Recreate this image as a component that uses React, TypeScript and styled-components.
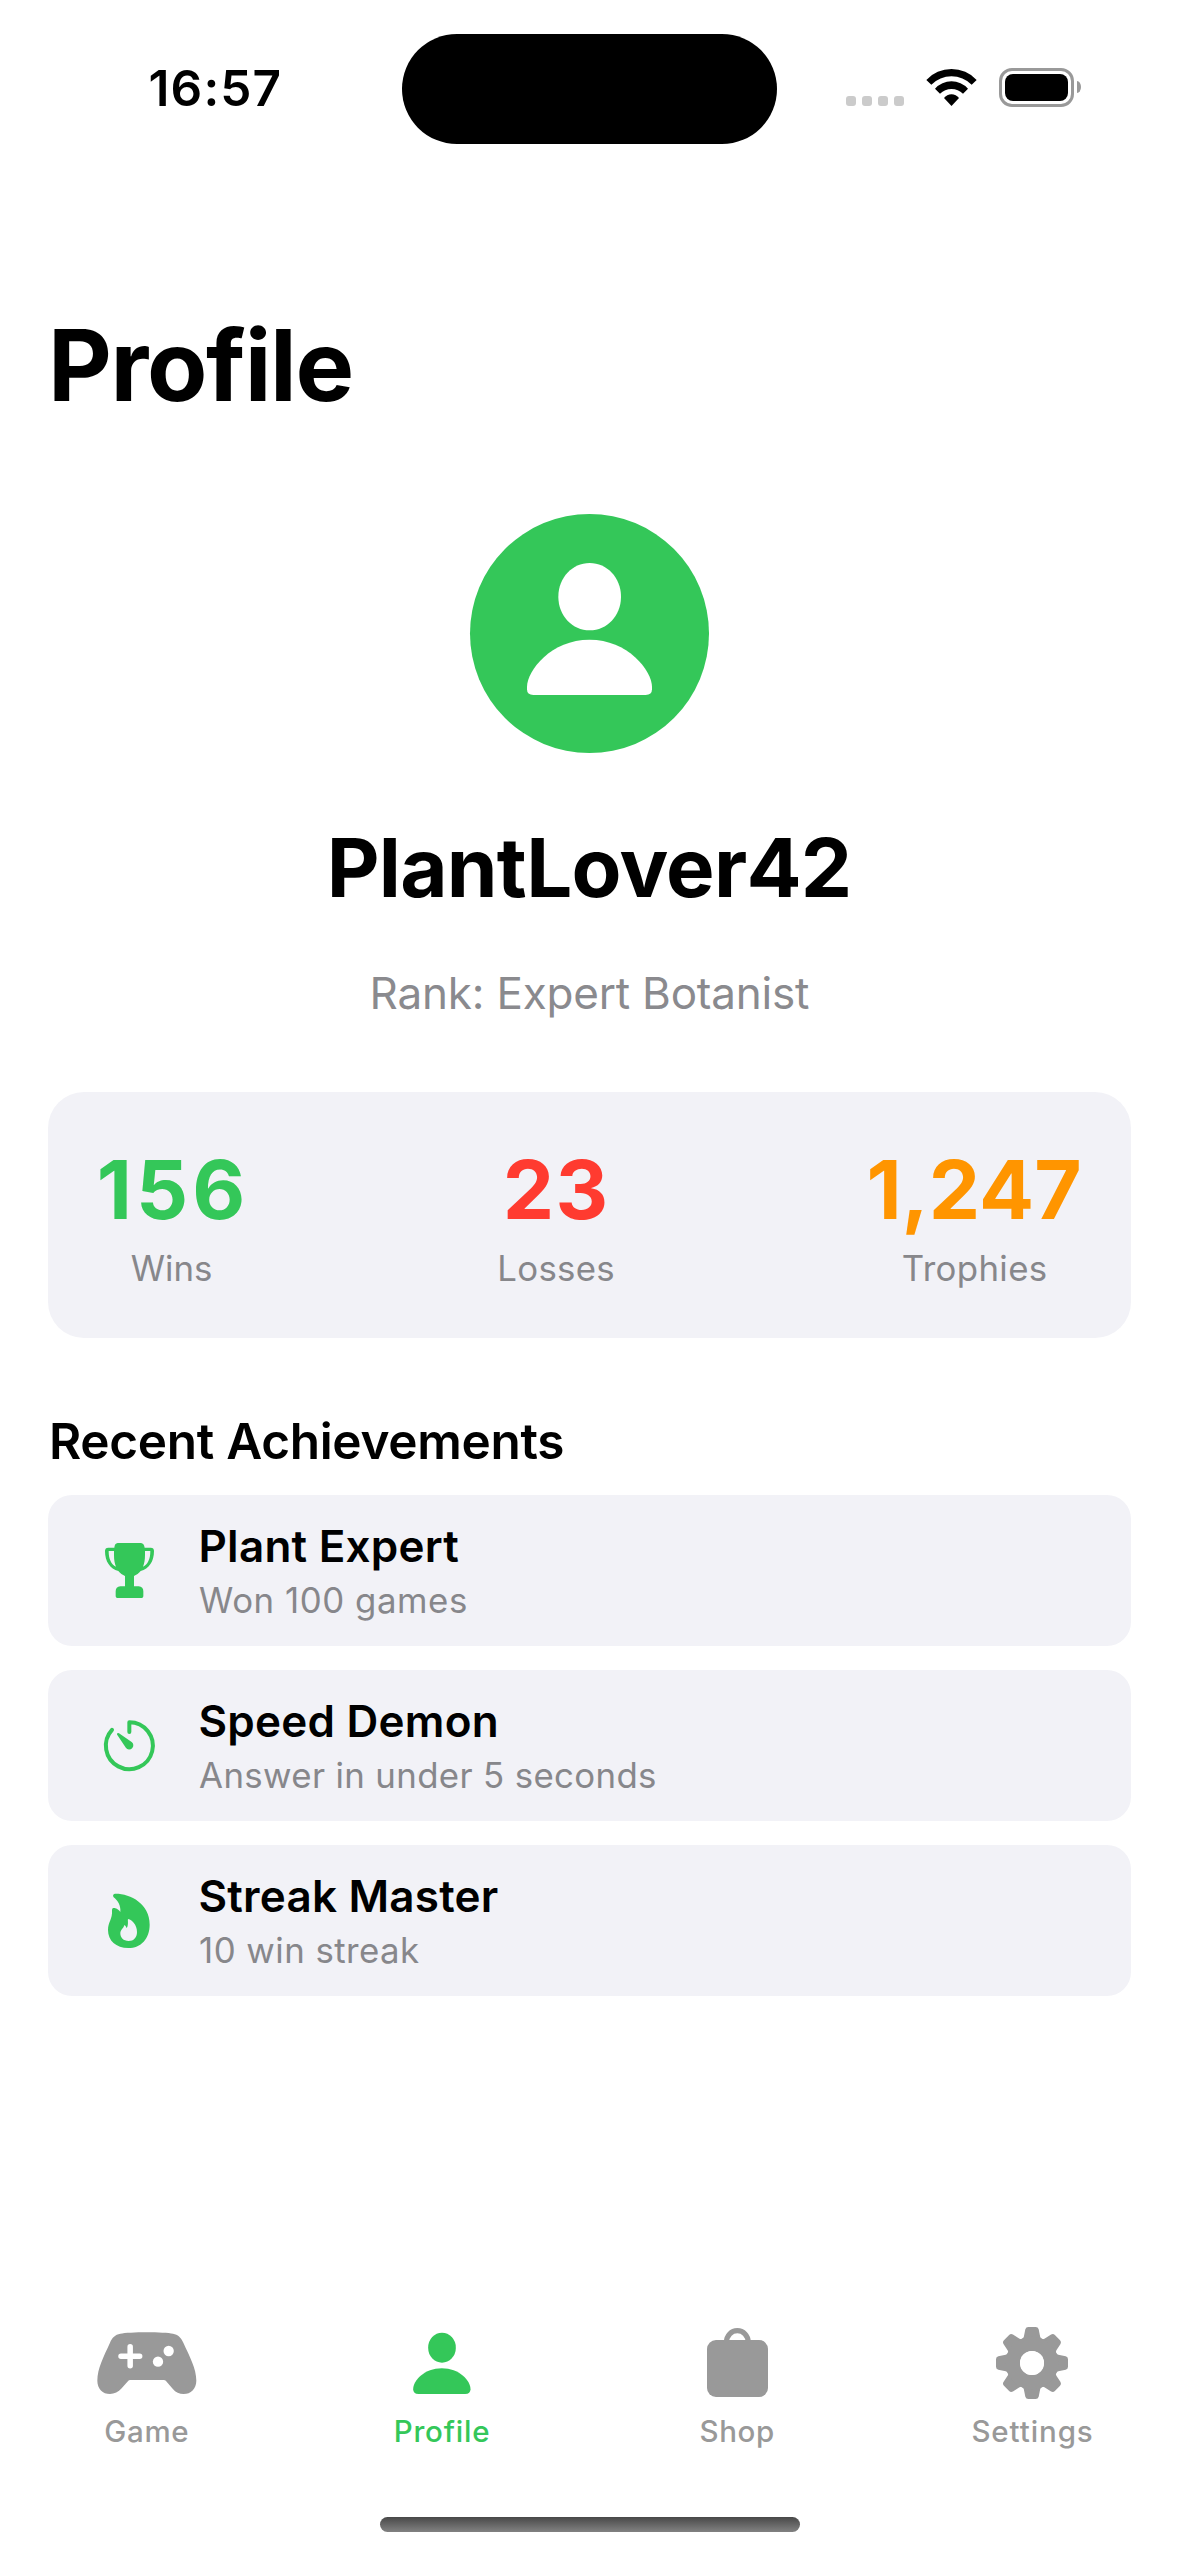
import React from 'react';
import styled, { createGlobalStyle } from 'styled-components';

const color = {
  green: '#34c759',
  red: '#ff3b30',
  orange: '#ff9500',
  card: '#f2f2f7',
  secondary: '#8a8a8e',
  secondaryOnCard: '#87878b',
  tab: '#999999',
};

const GlobalStyle = createGlobalStyle`
  * { box-sizing: border-box; }
  html, body { margin: 0; padding: 0; background: #fff; }
  body { font-family: Inter, "Liberation Sans", sans-serif; color: #000; }
  h1, h2, h3, p { margin: 0; font-weight: inherit; }
  svg { display: block; flex: none; }
`;

const Screen = styled.div`
  display: flex;
  flex-direction: column;
  width: 1179px;
  height: 2556px;
  background: #fff;
  overflow: hidden;
`;

/* Text with a letter spacing that leaves no trailing space after the last glyph */
const Tracked = styled.span<{ $track?: number }>`
  display: block;
  white-space: nowrap;
  letter-spacing: ${(p) => p.$track ?? 0}px;
  margin-right: ${(p) => -(p.$track ?? 0)}px;
`;

/* ---------- status bar ---------- */

const StatusBar = styled.header`
  display: flex;
  align-items: flex-start;
  height: 177px;
  padding: 34px 0 0 148.5px;
  flex: none;
`;

const Clock = styled.div`
  width: 253.5px;
  padding-top: 24px;
  font-size: 49.5px;
  font-weight: 600;
  line-height: 60px;
`;

const Island = styled.div`
  width: 375px;
  height: 110px;
  border-radius: 55px;
  background: #000;
`;

const Indicators = styled.div`
  display: flex;
  align-items: flex-end;
  height: 39px;
  margin: 34px 0 0 69px;
`;

const Signal = styled.div`
  display: flex;
  gap: 6px;
  margin-bottom: 1px;
`;

const SignalDot = styled.i`
  width: 10px;
  height: 10px;
  border-radius: 3px;
  background: #cbcbcb;
`;

const WifiIcon = styled.svg`
  margin: 0 0 1px 22px;
`;

const Battery = styled.div`
  width: 75px;
  height: 39px;
  margin-left: 22px;
  padding: 3px;
  border: 3px solid #999;
  border-radius: 13px;
`;

const BatteryLevel = styled.div`
  height: 100%;
  border-radius: 8px;
  background: #000;
`;

const BatteryCap = styled.div`
  width: 4px;
  height: 12px;
  margin: 0 0 14px 3px;
  border-radius: 0 4px 4px 0 / 0 6px 6px 0;
  background: #999;
`;

/* ---------- profile ---------- */

const Content = styled.main`
  display: flex;
  flex-direction: column;
  flex: 1;
  padding: 127.5px 48px 0;
`;

const PageTitle = styled.h1`
  font-size: 98.6px;
  font-weight: 700;
  line-height: 120px;
`;

const Identity = styled.section`
  display: flex;
  flex-direction: column;
  align-items: center;
  padding-top: 89.5px;
`;

const Avatar = styled.div`
  display: flex;
  width: 239px;
  height: 239px;
  border-radius: 50%;
  background: ${color.green};
`;

const UserName = styled.h2`
  margin-top: 63.5px;
  font-size: 81.6px;
  font-weight: 700;
  line-height: 102px;
`;

const Rank = styled.p`
  margin-top: 47px;
  font-size: 44px;
  line-height: 54px;
  color: ${color.secondary};
`;

const Stats = styled.section`
  display: flex;
  justify-content: space-between;
  height: 246px;
  margin-top: 72px;
  padding: 47px 48px 0;
  border-radius: 36px;
  background: ${color.card};
`;

const Stat = styled.div<{ $width: number }>`
  display: flex;
  flex-direction: column;
  align-items: center;
  gap: 3px;
  width: ${(p) => p.$width}px;
`;

const StatValue = styled.div<{ $color: string }>`
  font-size: 81.6px;
  font-weight: 700;
  line-height: 102px;
  color: ${(p) => p.$color};
`;

const StatLabel = styled.div`
  padding-left: 1px;
  font-size: 34.8px;
  line-height: 48px;
  color: ${color.secondaryOnCard};
`;

const SectionTitle = styled.h2`
  margin-top: 73px;
  padding-left: 1px;
  font-size: 49.5px;
  font-weight: 600;
  line-height: 60px;
`;

const AchievementList = styled.div`
  display: flex;
  flex-direction: column;
  gap: 24px;
  padding-top: 24px;
`;

const AchievementCard = styled.article`
  display: flex;
  height: 151px;
  padding: 24px 32px;
  border-radius: 24px;
  background: ${color.card};
`;

const AchievementIcon = styled.svg`
  width: 100px;
  height: 100px;
  margin: 1px 18.5px 0 0;
  color: ${color.green};
`;

const AchievementText = styled.div`
  display: flex;
  flex-direction: column;
  gap: 3px;
`;

const AchievementName = styled.h3`
  font-size: 44px;
  font-weight: 600;
  line-height: 54px;
`;

const AchievementNote = styled.p`
  padding-left: 0.6px;
  font-size: 34.8px;
  line-height: 48px;
  color: ${color.secondaryOnCard};
`;

/* ---------- tab bar ---------- */

const TabBar = styled.nav`
  display: flex;
  flex-direction: column;
  align-items: center;
  flex: none;
  height: 233px;
`;

const Tabs = styled.div`
  display: flex;
  gap: 2.2px;
  width: 1179px;
`;

const Tab = styled.div<{ $active?: boolean }>`
  display: flex;
  flex-direction: column;
  align-items: center;
  width: 293px;
  color: ${(p) => (p.$active ? color.green : color.tab)};
`;

const TabIcon = styled.svg`
  width: 100px;
  height: 90px;
`;

const TabLabel = styled.div`
  font-size: 29.5px;
  font-weight: 500;
  line-height: 36px;
`;

const HomeIndicator = styled.div`
  width: 420px;
  height: 15px;
  margin: 68px 0 0 1px;
  border-radius: 8px;
  background: linear-gradient(#484848, #828282);
`;

/* ---------- drawings ---------- */

const Wifi = () => (
  <WifiIcon width="51" height="37" viewBox="438 117 153 111">
    <path d="M439 150A102.9 102.9 0 0 1 590 150L575 164A85.7 85.7 0 0 0 454 164Z" />
    <path d="M465 176A66.7 66.7 0 0 1 564 176L549 191A49.5 49.5 0 0 0 480 191Z" />
    <path d="M492 204A28.5 28.5 0 0 1 537 204L514.5 228Z" />
  </WifiIcon>
);

const AvatarPerson = () => (
  <svg width="239" height="239" viewBox="90 71 717 717" fill="#fff">
    <path d="M449 218C501 218 543 262 543 319C543 376 501 420 449 420C397 420 355 376 355 319C355 262 397 218 449 218Z" />
    <path d="M448.5 448C563 448 636 540 636 590V597Q636 614 617 614H280Q261 614 261 597V590C261 540 334 448 448.5 448Z" />
  </svg>
);

const Trophy = () => (
  <AchievementIcon viewBox="0 0 300 300" fill="currentColor">
    <path
      fillRule="evenodd"
      d="M113 69H183Q192 70 194 83H212Q222 83 222 93C222 125 207 146 182 153C177 160 169 165 162 168V199H176Q190 200 190 214V229Q190 234 185 234H112Q107 234 107 229V214Q107 200 121 199H135V168C128 165 120 160 115 153C90 146 75 125 75 93Q75 83 85 83H103Q104 70 113 69ZM86 93H102V105C102 120 104 130 108 140C94 133 86 118 86 93ZM211 93H195V105C195 120 193 130 189 140C203 133 211 118 211 93Z"
    />
  </AchievementIcon>
);

const Timer = () => (
  <AchievementIcon viewBox="0 0 300 300" fill="currentColor">
    <path
      d="M148 111V81.5A70.5 70.5 0 1 1 96 104.5"
      fill="none"
      stroke="currentColor"
      strokeWidth="12"
      strokeLinecap="round"
      strokeLinejoin="round"
    />
    <path d="M111 118.5Q110.5 113 117 114.5L155 141A12.5 12.5 0 1 1 137.5 158.5Z" />
  </AchievementIcon>
);

const Flame = () => (
  <AchievementIcon viewBox="0 0 300 300" fill="currentColor">
    <path
      fillRule="evenodd"
      d="M107 71.5C152 71.5 209 102 209 164C209 206 183 234 145 234C108 234 84 212 84 180C84 156 98 148 96 121C96 113 101 113 106 115C112 117 118 121 121 126C123 107 113 91 101 82C97 75 101 71.5 107 71.5ZM145 147C155 149 171 164 171 186C171 203 161 213 146 213C130 213 121 203 121 190C121 178 131 175 132 167C133 163 139 169 140 175C145 166 144 158 143.5 149Z"
    />
  </AchievementIcon>
);

const Gamepad = () => (
  <TabIcon viewBox="110 69 300 270" fill="currentColor">
    <path d="M204 242L184 265C174 277 162 282 149 282C127 282 111 266 111 242C111 205 130 170 149 128C156 112 164 104 180 101C205 95 313 95 338 101C353 104 361 111 369 128C388 170 408 205 408 242C408 266 391 282 370 282C357 282 346 277 337 266L317 243Q315 240 310 240H209Q206 240 204 242Z" />
    <path d="M209.5 140V197M182 169H238" stroke="#fff" strokeWidth="16.5" strokeLinecap="round" />
    <circle cx="325" cy="153" r="15.5" fill="#fff" />
    <circle cx="293" cy="185" r="15.5" fill="#fff" />
  </TabIcon>
);

const Person = () => (
  <TabIcon viewBox="995.5 69 300 270" fill="currentColor">
    <ellipse cx="1145.5" cy="143" rx="41.5" ry="45" />
    <path d="M1145 205C1197 205 1231 242 1231 268Q1231 282 1215 282H1075Q1059 282 1059 268C1059 242 1093 205 1145 205Z" />
  </TabIcon>
);

const Bag = () => (
  <TabIcon viewBox="81 69 300 270" fill="currentColor">
    <rect x="141" y="120" width="183" height="171" rx="27" />
    <path d="M199.5 126A32.5 34 0 0 1 264.5 126" fill="none" stroke="currentColor" strokeWidth="16" />
  </TabIcon>
);

const TOOTH =
  'M-33 -71Q-26 -72 -24.5 -79L-20 -101Q-18 -108 -11 -108H11Q18 -108 20 -101L24.5 -79Q26 -72 33 -71L15 -40H-15Z';

const Gear = () => (
  <TabIcon viewBox="966 69 300 270" fill="currentColor">
    <g transform="translate(1116 189)">
      {[0, 45, 90, 135, 180, 225, 270, 315].map((angle) => (
        <path key={angle} d={TOOTH} transform={`rotate(${angle})`} />
      ))}
      <circle r="57.5" fill="none" stroke="currentColor" strokeWidth="43" />
      <circle r="36" fill="#fff" />
    </g>
  </TabIcon>
);

/* ---------- data ---------- */

const stats = [
  { value: '156', label: 'Wins', tint: color.green, width: 150, valueTrack: 4.2, labelTrack: 0 },
  { value: '23', label: 'Losses', tint: color.red, width: 117, valueTrack: 1.5, labelTrack: 0.3 },
  { value: '1,247', label: 'Trophies', tint: color.orange, width: 218, valueTrack: 0, labelTrack: 0.36 },
];

const achievements = [
  { name: 'Plant Expert', note: 'Won 100 games', Icon: Trophy, nameTrack: 0.24, noteTrack: 0.55 },
  { name: 'Speed Demon', note: 'Answer in under 5 seconds', Icon: Timer, nameTrack: 0.24, noteTrack: 0.35 },
  { name: 'Streak Master', note: '10 win streak', Icon: Flame, nameTrack: 0.22, noteTrack: 0.45 },
];

const tabs = [
  { label: 'Game', Icon: Gamepad, track: 0.66 },
  { label: 'Profile', Icon: Person, track: 0.83, active: true },
  { label: 'Shop', Icon: Bag, track: 0.69 },
  { label: 'Settings', Icon: Gear, track: 0.9 },
];

export default function App() {
  return (
    <Screen>
      <GlobalStyle />
      <StatusBar>
        <Clock>
          <Tracked $track={1.15}>16:57</Tracked>
        </Clock>
        <Island />
        <Indicators>
          <Signal>
            <SignalDot />
            <SignalDot />
            <SignalDot />
            <SignalDot />
          </Signal>
          <Wifi />
          <Battery>
            <BatteryLevel />
          </Battery>
          <BatteryCap />
        </Indicators>
      </StatusBar>

      <Content>
        <PageTitle>
          <Tracked $track={-1.35}>Profile</Tracked>
        </PageTitle>

        <Identity>
          <Avatar>
            <AvatarPerson />
          </Avatar>
          <UserName>
            <Tracked $track={-0.75}>PlantLover42</Tracked>
          </UserName>
          <Rank>
            <Tracked $track={-0.2}>Rank: Expert Botanist</Tracked>
          </Rank>
        </Identity>

        <Stats>
          {stats.map((s) => (
            <Stat key={s.label} $width={s.width}>
              <StatValue $color={s.tint}>
                <Tracked $track={s.valueTrack}>{s.value}</Tracked>
              </StatValue>
              <StatLabel>
                <Tracked $track={s.labelTrack}>{s.label}</Tracked>
              </StatLabel>
            </Stat>
          ))}
        </Stats>

        <SectionTitle>
          <Tracked $track={-0.3}>Recent Achievements</Tracked>
        </SectionTitle>
        <AchievementList>
          {achievements.map(({ name, note, Icon, nameTrack, noteTrack }) => (
            <AchievementCard key={name}>
              <Icon />
              <AchievementText>
                <AchievementName>
                  <Tracked $track={nameTrack}>{name}</Tracked>
                </AchievementName>
                <AchievementNote>
                  <Tracked $track={noteTrack}>{note}</Tracked>
                </AchievementNote>
              </AchievementText>
            </AchievementCard>
          ))}
        </AchievementList>
      </Content>

      <TabBar>
        <Tabs>
          {tabs.map(({ label, Icon, track, active }) => (
            <Tab key={label} $active={active}>
              <Icon />
              <TabLabel>
                <Tracked $track={track}>{label}</Tracked>
              </TabLabel>
            </Tab>
          ))}
        </Tabs>
        <HomeIndicator />
      </TabBar>
    </Screen>
  );
}
